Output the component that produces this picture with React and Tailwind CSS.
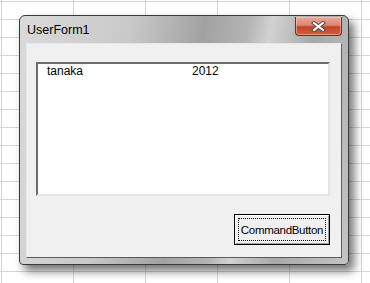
import React from "react";

const rows = [{ name: "tanaka", year: "2012" }];

const CloseButton = () => (
  <div className="mt-[1px] mr-[6px] flex h-[19px] w-[47px] items-center justify-center rounded-b-[4px] border border-t-0 border-[#7a2a1c] bg-[linear-gradient(to_bottom,#e9a897_0%,#dc8670_45%,#c4432b_55%,#d0603f_100%)] shadow-[inset_0_0_0_1px_rgba(255,210,200,0.5)]">
    <svg width="15" height="11" viewBox="0 0 15 11">
      <path d="M3 2 L12 9 M12 2 L3 9" stroke="#4a4a4a" strokeWidth="4" strokeLinecap="square" />
      <path d="M3 2 L12 9 M12 2 L3 9" stroke="#ffffff" strokeWidth="2" strokeLinecap="square" />
    </svg>
  </div>
);

const App = () => {
  return (
    <div
      className="h-[283px] w-[370px] overflow-hidden bg-white bg-[linear-gradient(to_right,#d6d6d6_1px,transparent_1px),linear-gradient(to_bottom,#d6d6d6_1px,transparent_1px)] bg-[size:72px_18px] bg-[position:1px_1px] pl-[19px] pt-[15px]"
      style={{ fontFamily: '"Liberation Sans", Arial, sans-serif' }}
    >
      {/* window */}
      <div className="flex h-[250px] w-[330px] flex-col rounded-t-[6px] rounded-b-[4px] border border-[#3a3a3a] bg-[linear-gradient(100deg,#dadada_0%,#c9c9c9_30%,#a2a2a2_50%,#b4b4b4_62%,#d2d2d2_68%,#a8a8a8_80%,#c4c4c4_100%)] shadow-[5px_6px_10px_rgba(0,0,0,0.55)]">
        {/* title bar */}
        <div className="flex h-[27px] items-start justify-between">
          <span className="pl-[7px] pt-[6px] text-[12.5px] leading-[16px] text-black">UserForm1</span>
          <CloseButton />
        </div>
        {/* client */}
        <div className="mx-[6px] mb-[6px] flex flex-1 flex-col border border-t-[#e8e8e8] border-l-[#e8e8e8] border-r-[#5c5c5c] border-b-[#5c5c5c] bg-[#f0f0f0]">
          <div className="ml-[9px] mt-[18px] h-[134px] w-[294px] border-2 border-t-[#6e6e6e] border-l-[#6e6e6e] border-r-[#e4e4e4] border-b-[#e4e4e4] bg-white">
            {rows.map((r) => (
              <div key={r.name} className="flex text-[12px] leading-[14px] text-black">
                <span className="w-[154px] pl-[9px]">{r.name}</span>
                <span>{r.year}</span>
              </div>
            ))}
          </div>
          <div className="mt-auto mb-[12px] mr-[11px] flex justify-end">
            <button className="h-[31px] w-[96px] border border-black bg-[#f0f0f0] p-0">
              <div className="h-full w-full border border-t-white border-l-white border-r-[#a0a0a0] border-b-[#a0a0a0] p-[2px]">
                <div className="flex h-full w-full items-center justify-center whitespace-nowrap border border-dotted border-black text-[11.5px] leading-[14px] tracking-[-0.3px] text-black">
                  CommandButton
                </div>
              </div>
            </button>
          </div>
        </div>
      </div>
    </div>
  );
};

export default App;
